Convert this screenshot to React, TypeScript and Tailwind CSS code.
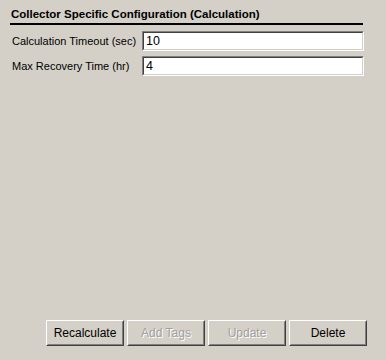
const font = { fontFamily: '"Liberation Sans", Arial, sans-serif' };

function Field({ label, value }: { label: string; value: string }) {
  return (
    <div className="flex h-[20px] items-center">
      <span className="w-[142px] shrink-0 whitespace-nowrap pl-[12px] text-[11px] leading-none text-black">{label}</span>
      <div className="h-[20px] w-[222px] border-[1px] border-t-[#808080] border-l-[#808080] border-b-white border-r-white">
        <div className="h-full w-full border-[1px] border-t-[#404040] border-l-[#404040] border-b-[#d4d0c8] border-r-[#d4d0c8] bg-white pl-[2px] text-[12.5px] leading-[16px] text-black">
          {value}
        </div>
      </div>
    </div>
  );
}

function Button({ label, disabled }: { label: string; disabled?: boolean }) {
  return (
    <div className="h-[26px] w-[78px] border-[1px] border-t-white border-l-white border-b-[#404040] border-r-[#404040]">
      <div
        className={`flex h-full w-full items-center justify-center border-[1px] border-t-[#d4d0c8] border-l-[#d4d0c8] border-b-[#808080] border-r-[#808080] text-[12px] ${
          disabled ? "text-[#a0a0a0] [text-shadow:1px_1px_0_#ffffff]" : "text-black"
        }`}
      >
        {label}
      </div>
    </div>
  );
}

export default function App() {
  return (
    <div className="flex h-[360px] w-[386px] flex-col bg-[#d4d0c8]" style={font}>
      <div className="pl-[11px] pt-[7px] text-[11.5px] font-bold leading-[14px] text-black">
        Collector Specific Configuration (Calculation)
      </div>
      <div className="ml-[10px] mt-[2px] h-[2px] w-[353px] bg-black" />
      <div className="mt-[6px] flex flex-col gap-[5px]">
        <Field label="Calculation Timeout (sec)" value="10" />
        <Field label="Max Recovery Time (hr)" value="4" />
      </div>
      <div className="mt-auto mb-[14px] flex gap-[3px] pl-[46px]">
        <Button label="Recalculate" />
        <Button label="Add Tags" disabled />
        <Button label="Update" disabled />
        <Button label="Delete" />
      </div>
    </div>
  );
}
